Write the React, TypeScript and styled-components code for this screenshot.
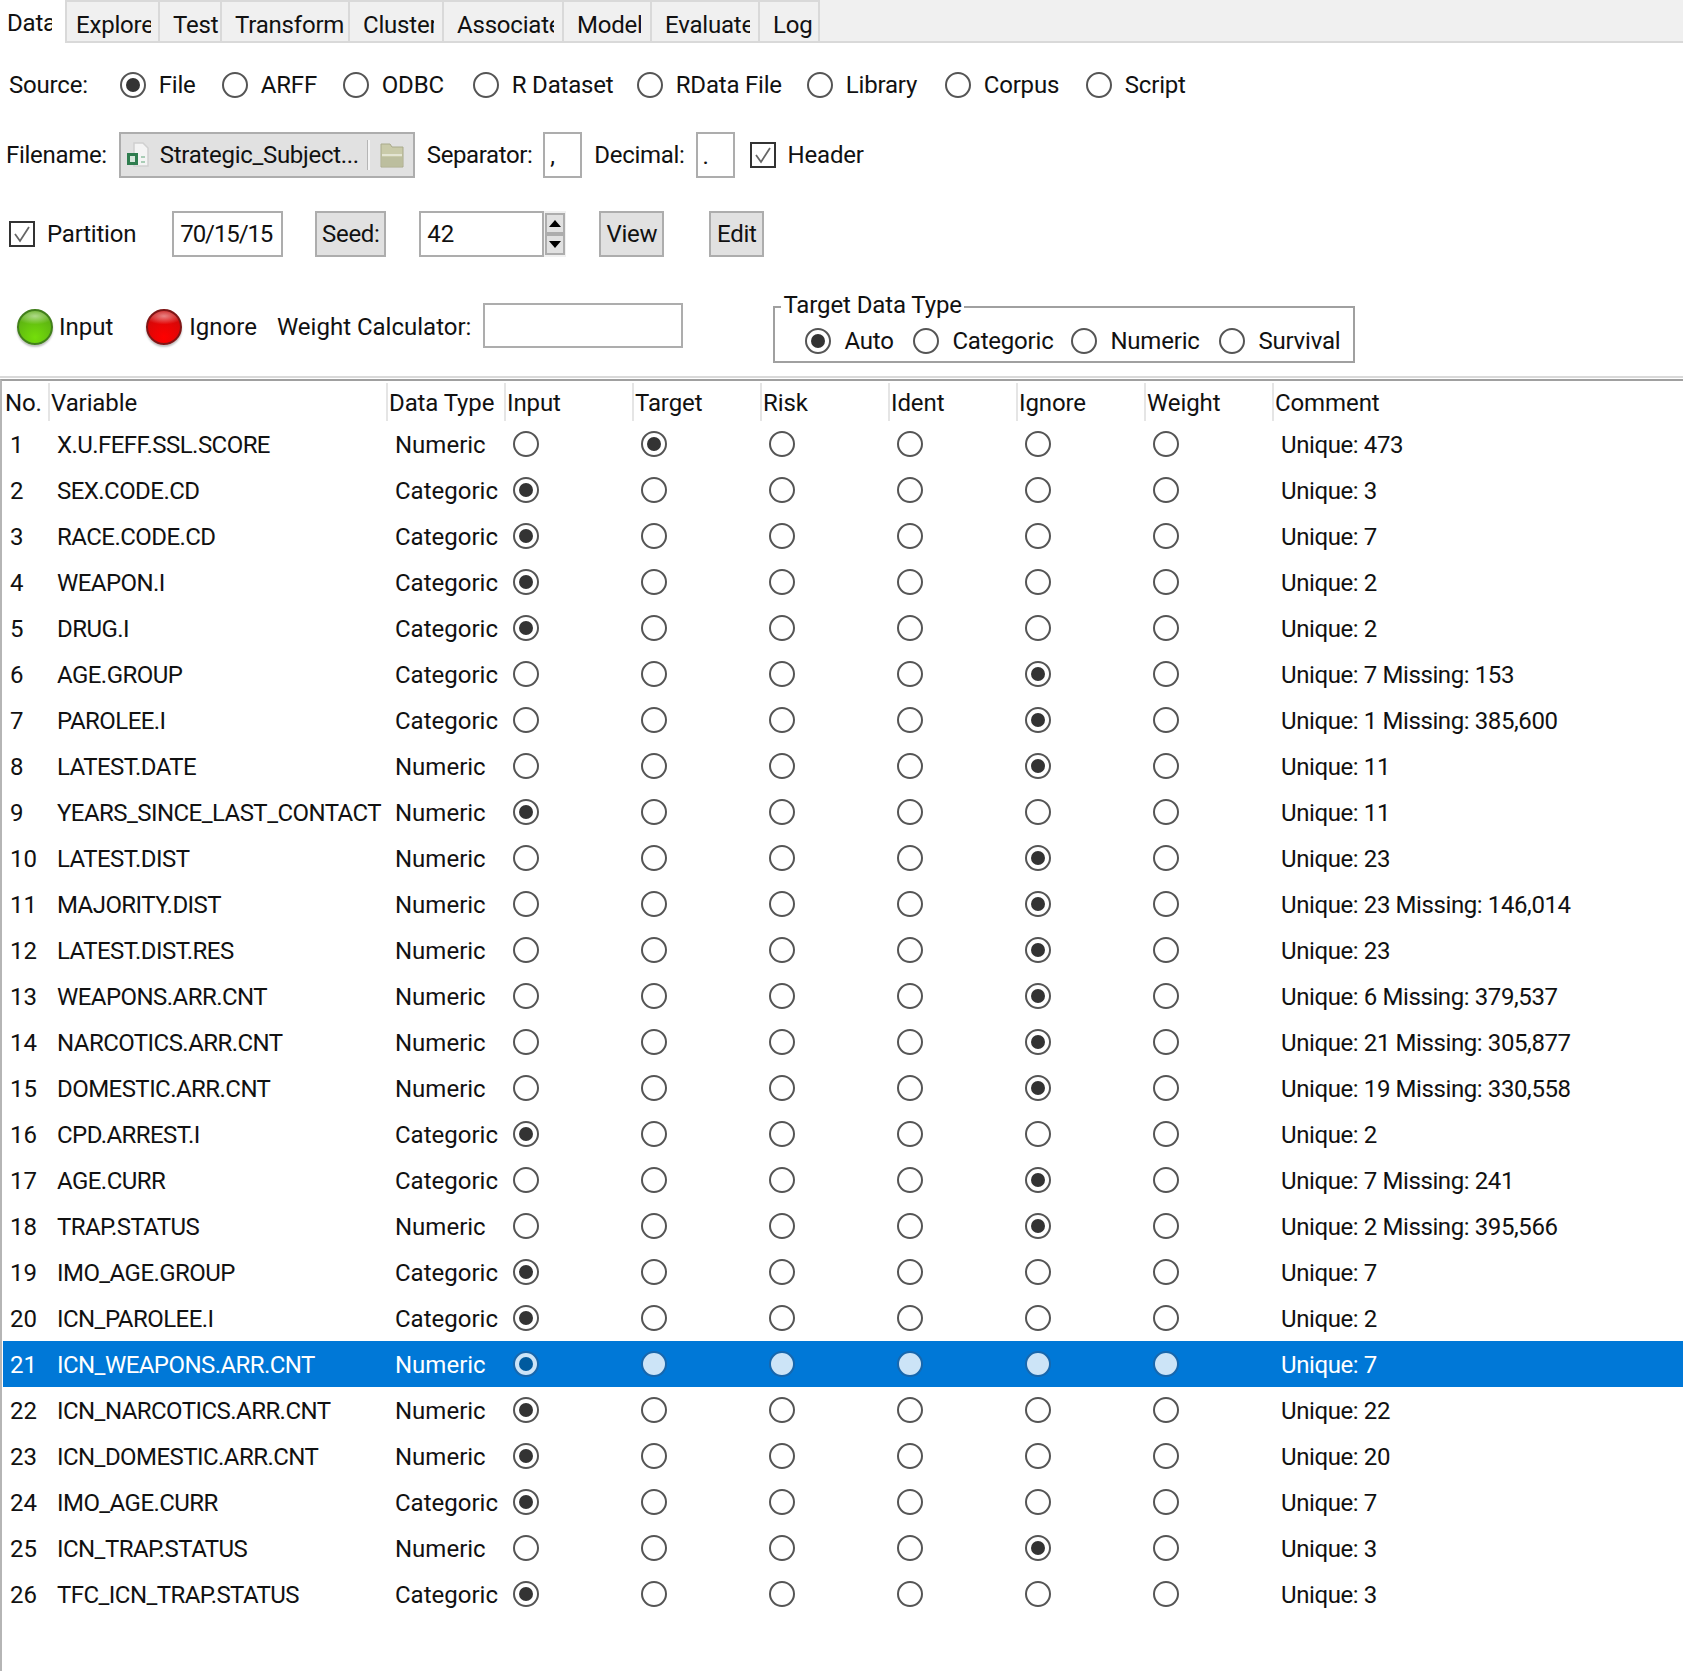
import React from 'react';
import styled, { createGlobalStyle } from 'styled-components';

const GlobalStyle = createGlobalStyle`
  html, body {
    margin: 0;
    padding: 0;
    background: #fff;
  }
  body {
    font-family: Roboto, "Liberation Sans", sans-serif;
    font-size: 24px;
    color: #111;
  }
`;

const Page = styled.div`
  width: 1683px;
  height: 1671px;
  overflow: hidden;
  display: flex;
  flex-direction: column;
  white-space: nowrap;
`;

const TabBar = styled.div`
  height: 41px;
  display: flex;
  background: #f0f0f0;
  border-bottom: 2px solid #d9d9d9;
`;

const Tab = styled.div<{ $width: number; $active?: boolean }>`
  width: ${(p) => p.$width}px;
  box-sizing: border-box;
  height: ${(p) => (p.$active ? 43 : 41)}px;
  line-height: 46px;
  background: ${(p) => (p.$active ? '#fff' : '#f0f0f0')};
  border-right: 2px solid #d9d9d9;
  border-top: ${(p) => (p.$active ? 'none' : '2px solid #d9d9d9')};
`;

// the tabs are too narrow for their labels in the original, so some get clipped
const TabLabel = styled.span<{ $left: number; $right: number }>`
  display: block;
  overflow: hidden;
  margin: 0 ${(p) => p.$right}px 0 ${(p) => p.$left}px;
  letter-spacing: -0.2px;
`;

const SourceRow = styled.div`
  height: 46px;
  margin-top: 19px;
  padding-left: 9px;
  display: flex;
  align-items: center;
`;

const FieldLabel = styled.span<{ $left?: number; $right?: number; $track?: number }>`
  margin-left: ${(p) => p.$left ?? 0}px;
  margin-right: ${(p) => p.$right ?? 0}px;
  letter-spacing: ${(p) => p.$track ?? 0}px;
`;

const RadioOption = styled.label<{ $width: number }>`
  width: ${(p) => p.$width}px;
  display: flex;
  align-items: center;
  flex: none;
`;

const RadioMark = styled.span<{ $on?: boolean; $inverted?: boolean }>`
  flex: none;
  width: 26px;
  height: 26px;
  box-sizing: border-box;
  border-radius: 50%;
  position: relative;
  display: block;
  border: 2px solid ${(p) => (p.$inverted ? '#1767ad' : '#555')};
  background: ${(p) => (p.$inverted ? '#cce4f7' : 'transparent')};
  &::after {
    content: '';
    display: ${(p) => (p.$on ? 'block' : 'none')};
    position: absolute;
    inset: 4px;
    border-radius: 50%;
    background: ${(p) => (p.$inverted ? '#005a9e' : '#333')};
  }
`;

const OptionText = styled.span`
  margin-left: 13px;
  letter-spacing: -0.2px;
`;

const FileRow = styled.div`
  height: 46px;
  margin-top: 24px;
  padding-left: 6px;
  display: flex;
  align-items: center;
`;

const FileChooser = styled.div`
  width: 296px;
  height: 46px;
  margin-left: 12px;
  box-sizing: border-box;
  background: #e1e1e1;
  border: 2px solid #adadad;
  display: flex;
  align-items: center;
  padding-left: 5px;
`;

const ChooserName = styled.span`
  width: 207px;
  margin-left: 10px;
  letter-spacing: -0.3px;
`;

const ChooserRule = styled.span`
  width: 2px;
  height: 30px;
  background: #f4f4f4;
  border-left: 1px solid #b5b5b5;
  margin-right: 10px;
`;

const SmallEntry = styled.div<{ $left: number }>`
  width: 39px;
  height: 46px;
  margin-left: ${(p) => p.$left}px;
  box-sizing: border-box;
  border: 2px solid #adadad;
  background: #fff;
  padding-left: 5px;
  line-height: 44px;
`;

const CheckBox = styled.span<{ $left?: number }>`
  flex: none;
  width: 26px;
  height: 26px;
  margin-left: ${(p) => p.$left ?? 0}px;
  margin-right: -1px;
  box-sizing: border-box;
  border: 2px solid #333;
  display: flex;
  align-items: center;
  justify-content: center;
`;

const PartitionRow = styled.div`
  height: 46px;
  margin-top: 33px;
  padding-left: 9px;
  display: flex;
  align-items: center;
`;

const Entry = styled.div<{ $width: number; $left: number; $track?: number }>`
  width: ${(p) => p.$width}px;
  height: 46px;
  margin-left: ${(p) => p.$left}px;
  box-sizing: border-box;
  border: 2px solid #adadad;
  background: #fff;
  padding-left: 6px;
  line-height: 43px;
  letter-spacing: ${(p) => p.$track ?? 0}px;
`;

const GreyButton = styled.div<{ $width: number; $left: number }>`
  width: ${(p) => p.$width}px;
  height: 46px;
  margin-left: ${(p) => p.$left}px;
  box-sizing: border-box;
  border: 2px solid #adadad;
  background: #e1e1e1;
  text-align: center;
  line-height: 43px;
  letter-spacing: -0.3px;
`;

const SpinBox = styled.div`
  width: 22px;
  height: 46px;
  display: flex;
  flex-direction: column;
  align-items: center;
  background: #f0f0f0;
  padding-top: 2px;
  box-sizing: border-box;
`;

const SpinButton = styled.div`
  width: 20px;
  height: 21px;
  background: #e1e1e1;
  border: 2px solid #adadad;
  box-sizing: border-box;
  display: flex;
  align-items: center;
  justify-content: center;
`;

const RoleRow = styled.div`
  margin-top: 43px;
  height: 68px;
  padding-left: 17px;
  display: flex;
  align-items: flex-start;
`;

const Led = styled.span<{ $colour: 'green' | 'red'; $left?: number }>`
  flex: none;
  width: 36px;
  height: 36px;
  margin-top: 9px;
  margin-left: ${(p) => p.$left ?? 0}px;
  box-sizing: border-box;
  border-radius: 50%;
  box-shadow: 0 2px 2px rgba(0, 0, 0, 0.25);
  border: 2px solid ${(p) => (p.$colour === 'green' ? '#427f1c' : '#7f1616')};
  background: ${(p) =>
    p.$colour === 'green'
      ? 'radial-gradient(ellipse 60% 26% at 50% 16%, rgba(255, 255, 255, 0.5), transparent), radial-gradient(circle at 50% 82%, #74de0a 0%, #62bd10 55%, #55a015 100%)'
      : 'radial-gradient(ellipse 60% 26% at 50% 16%, rgba(255, 255, 255, 0.5), transparent), radial-gradient(circle at 50% 82%, #ff0000 0%, #df0606 55%, #bc0d0d 100%)'};
`;

const RoleText = styled.span<{ $left: number }>`
  margin-left: ${(p) => p.$left}px;
  line-height: 54px;
`;

const WeightEntry = styled.div`
  width: 200px;
  height: 45px;
  margin-left: 12px;
  margin-top: 3px;
  box-sizing: border-box;
  border: 2px solid #adadad;
`;

const TypeFrame = styled.fieldset`
  width: 582px;
  height: 57px;
  margin: 6px 0 0 90px;
  padding: 0;
  box-sizing: border-box;
  border: 2px solid #a0a0a0;
  display: flex;
  position: relative;
`;

const FrameTitle = styled.span`
  position: absolute;
  left: 6px;
  top: -18px;
  padding: 0 2px;
  background: #fff;
  line-height: 30px;
  letter-spacing: -0.1px;
`;

const FrameOptions = styled.div`
  display: flex;
  align-items: center;
  padding: 16px 0 0 30px;
  height: 34px;
`;

const TableFrame = styled.div`
  flex: 1;
  margin-top: 8px;
  border-top: 2px solid #d9d9d9;
  padding-top: 1px;
`;

const TableBody = styled.div`
  height: 100%;
  border-top: 2px solid #a0a0a0;
  border-left: 2px solid #b5b5b5;
  box-sizing: border-box;
  padding-top: 2px;
`;

const columns = '46px 338px 118px repeat(6, 128px) 1fr';

const HeaderRow = styled.div`
  display: grid;
  grid-template-columns: ${columns};
  height: 38px;
`;

const HeaderCell = styled.div<{ $first?: boolean }>`
  padding-left: ${(p) => (p.$first ? 3 : 1)}px;
  line-height: 40px;
  border-left: ${(p) => (p.$first ? 'none' : '2px solid #e5e5e5')};
  overflow: hidden;
  letter-spacing: -0.1px;
`;

const DataRow = styled.div<{ $selected?: boolean }>`
  display: grid;
  grid-template-columns: ${columns};
  height: 46px;
  align-items: center;
  background: ${(p) => (p.$selected ? '#0078d7' : 'transparent')};
  color: ${(p) => (p.$selected ? '#fff' : '#111')};
  margin-left: 1px;
`;

const NumberCell = styled.div`
  padding: 2px 0 0 7px;
`;

const NameCell = styled.div`
  padding: 2px 0 0 8px;
  letter-spacing: -0.55px;
`;

const TypeCell = styled.div`
  padding: 2px 0 0 8px;
`;

const RoleCell = styled.div`
  padding-left: 8px;
  display: flex;
`;

const CommentCell = styled.div`
  padding: 2px 0 0 8px;
  letter-spacing: -0.4px;
`;

const tabs = [
  { label: 'Data', width: 67, left: 7, right: 13 },
  { label: 'Explore', width: 93, left: 9, right: 7 },
  { label: 'Test', width: 62, left: 13, right: 0 },
  { label: 'Transform', width: 128, left: 13, right: 0 },
  { label: 'Cluster', width: 94, left: 13, right: 8 },
  { label: 'Associate', width: 120, left: 13, right: 8 },
  { label: 'Model', width: 88, left: 13, right: 9 },
  { label: 'Evaluate', width: 108, left: 13, right: 8 },
  { label: 'Log', width: 60, left: 13, right: 0 },
];

const sources = [
  { label: 'File', width: 102 },
  { label: 'ARFF', width: 121 },
  { label: 'ODBC', width: 130 },
  { label: 'R Dataset', width: 164 },
  { label: 'RData File', width: 170 },
  { label: 'Library', width: 138 },
  { label: 'Corpus', width: 141 },
  { label: 'Script', width: 120 },
];

const targetTypes = [
  { label: 'Auto', width: 108 },
  { label: 'Categoric', width: 158 },
  { label: 'Numeric', width: 148 },
  { label: 'Survival', width: 120 },
];

const roles = ['Input', 'Target', 'Risk', 'Ident', 'Ignore', 'Weight'];

type Variable = [string, 'Numeric' | 'Categoric', string, string];

const variables: Variable[] = [
  ['X.U.FEFF.SSL.SCORE', 'Numeric', 'Target', 'Unique: 473'],
  ['SEX.CODE.CD', 'Categoric', 'Input', 'Unique: 3'],
  ['RACE.CODE.CD', 'Categoric', 'Input', 'Unique: 7'],
  ['WEAPON.I', 'Categoric', 'Input', 'Unique: 2'],
  ['DRUG.I', 'Categoric', 'Input', 'Unique: 2'],
  ['AGE.GROUP', 'Categoric', 'Ignore', 'Unique: 7 Missing: 153'],
  ['PAROLEE.I', 'Categoric', 'Ignore', 'Unique: 1 Missing: 385,600'],
  ['LATEST.DATE', 'Numeric', 'Ignore', 'Unique: 11'],
  ['YEARS_SINCE_LAST_CONTACT', 'Numeric', 'Input', 'Unique: 11'],
  ['LATEST.DIST', 'Numeric', 'Ignore', 'Unique: 23'],
  ['MAJORITY.DIST', 'Numeric', 'Ignore', 'Unique: 23 Missing: 146,014'],
  ['LATEST.DIST.RES', 'Numeric', 'Ignore', 'Unique: 23'],
  ['WEAPONS.ARR.CNT', 'Numeric', 'Ignore', 'Unique: 6 Missing: 379,537'],
  ['NARCOTICS.ARR.CNT', 'Numeric', 'Ignore', 'Unique: 21 Missing: 305,877'],
  ['DOMESTIC.ARR.CNT', 'Numeric', 'Ignore', 'Unique: 19 Missing: 330,558'],
  ['CPD.ARREST.I', 'Categoric', 'Input', 'Unique: 2'],
  ['AGE.CURR', 'Categoric', 'Ignore', 'Unique: 7 Missing: 241'],
  ['TRAP.STATUS', 'Numeric', 'Ignore', 'Unique: 2 Missing: 395,566'],
  ['IMO_AGE.GROUP', 'Categoric', 'Input', 'Unique: 7'],
  ['ICN_PAROLEE.I', 'Categoric', 'Input', 'Unique: 2'],
  ['ICN_WEAPONS.ARR.CNT', 'Numeric', 'Input', 'Unique: 7'],
  ['ICN_NARCOTICS.ARR.CNT', 'Numeric', 'Input', 'Unique: 22'],
  ['ICN_DOMESTIC.ARR.CNT', 'Numeric', 'Input', 'Unique: 20'],
  ['IMO_AGE.CURR', 'Categoric', 'Input', 'Unique: 7'],
  ['ICN_TRAP.STATUS', 'Numeric', 'Ignore', 'Unique: 3'],
  ['TFC_ICN_TRAP.STATUS', 'Categoric', 'Input', 'Unique: 3'],
];

const SELECTED_ROW = 21;

function CheckMark() {
  return (
    <svg width="20" height="20" viewBox="0 0 20 20" fill="none">
      <path d="M3 10 L8 17 L17 3" stroke="#666" strokeWidth="1.8" />
    </svg>
  );
}

function SheetIcon() {
  return (
    <svg width="24" height="28" viewBox="0 0 24 28">
      <path d="M8 2h9l5 5v18H8z" fill="#f4f4f4" stroke="#d0d0d0" strokeWidth="1.5" />
      <rect x="1" y="12" width="11" height="12" fill="#2f7d4f" />
      <rect x="4" y="15" width="5" height="6" fill="#d5e6db" />
      <rect x="15" y="15" width="4" height="2" fill="#a9cdb6" />
      <rect x="15" y="20" width="4" height="2" fill="#a9cdb6" />
    </svg>
  );
}

function FolderIcon() {
  return (
    <svg width="24" height="26" viewBox="0 0 24 26">
      <path d="M1 2h9l2 3h11v20H1z" fill="#c9caa9" stroke="#a9aa8b" strokeWidth="1" />
      <rect x="2" y="12" width="20" height="2" fill="#e4e5d3" />
      <rect x="2" y="15" width="20" height="9" fill="#bcbe9e" />
    </svg>
  );
}

function SpinArrow({ up }: { up?: boolean }) {
  return (
    <svg width="12" height="7" viewBox="0 0 12 7">
      <path d={up ? 'M6 0 L12 7 H0 Z' : 'M0 0 H12 L6 7 Z'} fill="#000" />
    </svg>
  );
}

export default function App() {
  return (
    <Page>
      <GlobalStyle />
      <TabBar>
        {tabs.map((t, i) => (
          <Tab key={t.label} $width={t.width} $active={i === 0}>
            <TabLabel $left={t.left} $right={t.right}>{t.label}</TabLabel>
          </Tab>
        ))}
      </TabBar>

      <SourceRow>
        <FieldLabel $right={32} $track={-0.2}>Source:</FieldLabel>
        {sources.map((s, i) => (
          <RadioOption key={s.label} $width={s.width}>
            <RadioMark $on={i === 0} />
            <OptionText>{s.label}</OptionText>
          </RadioOption>
        ))}
      </SourceRow>

      <FileRow>
        <FieldLabel $track={-0.3}>Filename:</FieldLabel>
        <FileChooser>
          <SheetIcon />
          <ChooserName>Strategic_Subject...</ChooserName>
          <ChooserRule />
          <FolderIcon />
        </FileChooser>
        <FieldLabel $left={12} $track={-0.4}>Separator:</FieldLabel>
        <SmallEntry $left={11}>,</SmallEntry>
        <FieldLabel $left={12} $track={-0.3}>Decimal:</FieldLabel>
        <SmallEntry $left={11}>.</SmallEntry>
        <CheckBox $left={15}>
          <CheckMark />
        </CheckBox>
        <OptionText>Header</OptionText>
      </FileRow>

      <PartitionRow>
        <CheckBox>
          <CheckMark />
        </CheckBox>
        <OptionText>Partition</OptionText>
        <Entry $width={111} $left={36} $track={-1.1}>70/15/15</Entry>
        <GreyButton $width={71} $left={32}>Seed:</GreyButton>
        <Entry $width={125} $left={33}>42</Entry>
        <SpinBox>
          <SpinButton>
            <SpinArrow up />
          </SpinButton>
          <SpinButton>
            <SpinArrow />
          </SpinButton>
        </SpinBox>
        <GreyButton $width={65} $left={33}>View</GreyButton>
        <GreyButton $width={55} $left={45}>Edit</GreyButton>
      </PartitionRow>

      <RoleRow>
        <Led $colour="green" />
        <RoleText $left={6}>Input</RoleText>
        <Led $colour="red" $left={33} />
        <RoleText $left={7}>Ignore</RoleText>
        <RoleText $left={20}>Weight Calculator:</RoleText>
        <WeightEntry />
        <TypeFrame>
          <FrameTitle>Target Data Type</FrameTitle>
          <FrameOptions>
            {targetTypes.map((t, i) => (
              <RadioOption key={t.label} $width={t.width}>
                <RadioMark $on={i === 0} />
                <OptionText>{t.label}</OptionText>
              </RadioOption>
            ))}
          </FrameOptions>
        </TypeFrame>
      </RoleRow>

      <TableFrame>
        <TableBody>
          <HeaderRow>
            <HeaderCell $first>No.</HeaderCell>
            <HeaderCell>Variable</HeaderCell>
            <HeaderCell>Data Type</HeaderCell>
            {roles.map((r) => (
              <HeaderCell key={r}>{r}</HeaderCell>
            ))}
            <HeaderCell>Comment</HeaderCell>
          </HeaderRow>
          {variables.map(([name, type, role, comment], i) => {
            const selected = i + 1 === SELECTED_ROW;
            return (
              <DataRow key={name} $selected={selected}>
                <NumberCell>{i + 1}</NumberCell>
                <NameCell>{name}</NameCell>
                <TypeCell>{type}</TypeCell>
                {roles.map((r) => (
                  <RoleCell key={r}>
                    <RadioMark $on={r === role} $inverted={selected} />
                  </RoleCell>
                ))}
                <CommentCell>{comment}</CommentCell>
              </DataRow>
            );
          })}
        </TableBody>
      </TableFrame>
    </Page>
  );
}
